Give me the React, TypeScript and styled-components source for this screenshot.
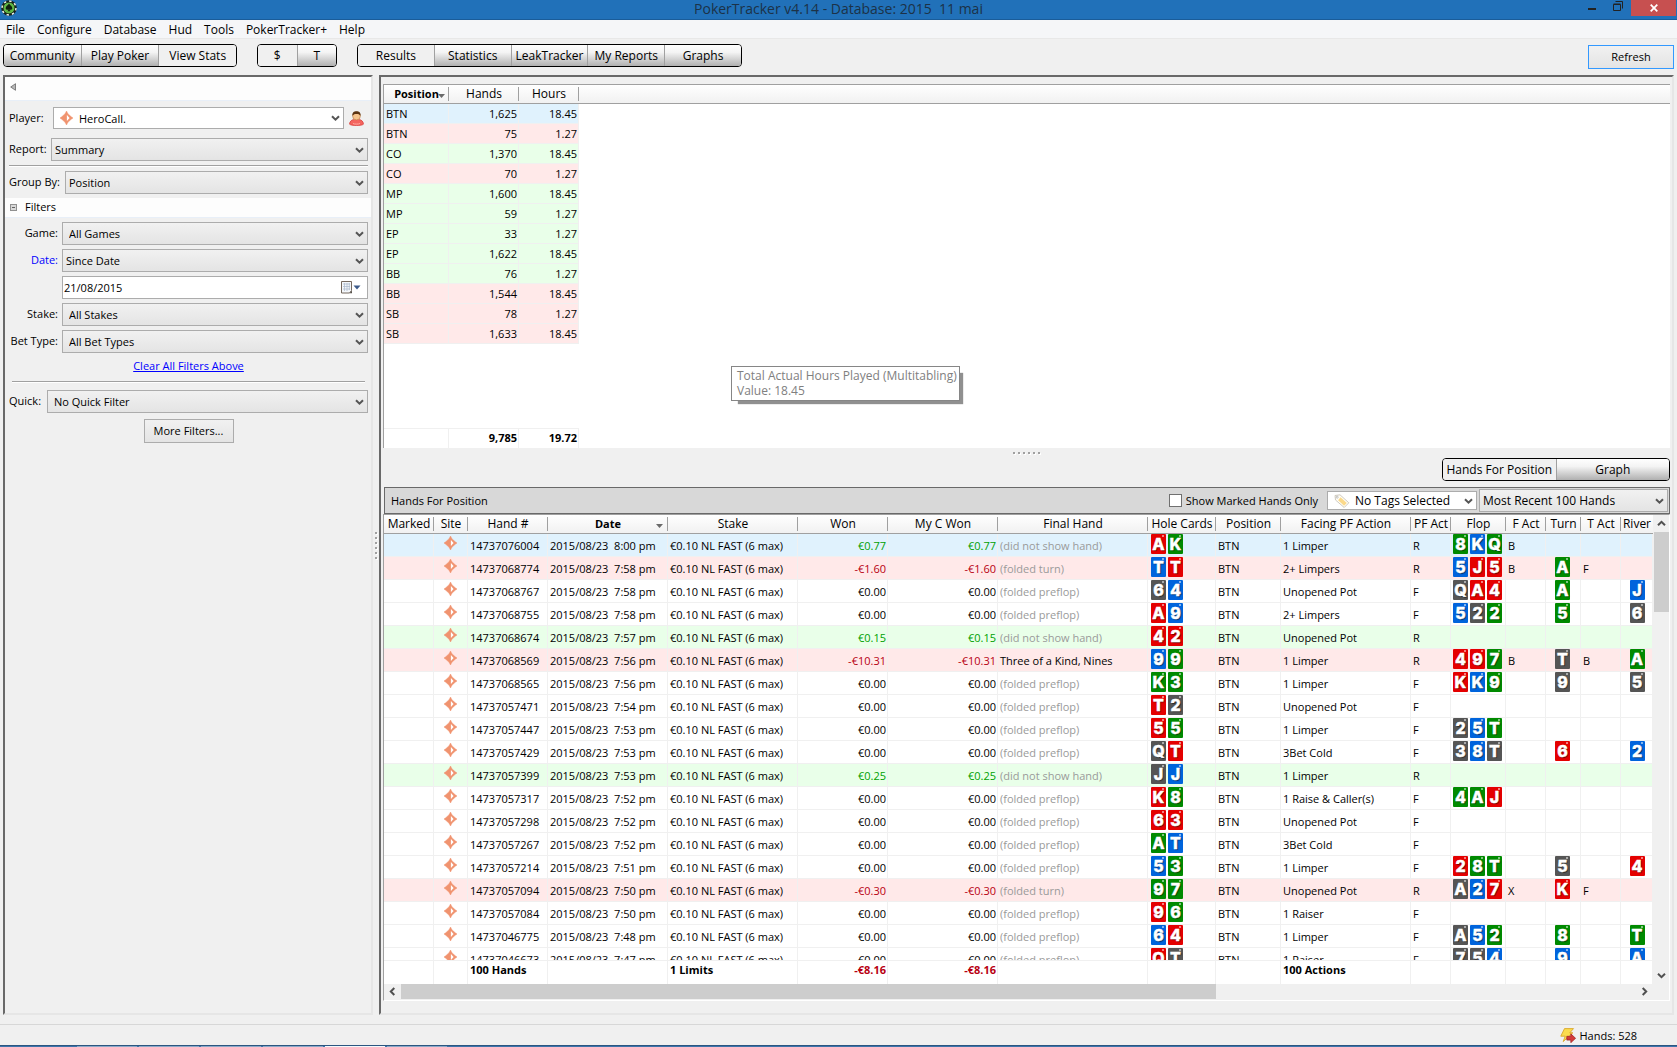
import React, { useState } from "react";
import styled, { createGlobalStyle, css } from "styled-components";

const GlobalStyle = createGlobalStyle`
  *, *::before, *::after { box-sizing: border-box; }
  body { margin: 0; overflow: hidden; background: #f0f0f0; }
  body, button, input, select {
    font-family: "Open Sans", "Noto Sans", sans-serif;
    font-size: 11px;
    color: #000;
  }
`;

/* ---------- data ---------- */

type Tone = "blue" | "pink" | "green" | "plain";

const toneColor: Record<Tone, string> = {
  blue: "#e0f2fd",
  pink: "#ffe9e9",
  green: "#e9ffe9",
  plain: "#ffffff",
};

const suitColor: Record<string, string> = {
  r: "#e40000",
  g: "#008a00",
  b: "#0064dc",
  k: "#555555",
};

const positions: [string, string, string, Tone][] = [
  ["BTN", "1,625", "18.45", "blue"],
  ["BTN", "75", "1.27", "pink"],
  ["CO", "1,370", "18.45", "green"],
  ["CO", "70", "1.27", "pink"],
  ["MP", "1,600", "18.45", "green"],
  ["MP", "59", "1.27", "green"],
  ["EP", "33", "1.27", "green"],
  ["EP", "1,622", "18.45", "green"],
  ["BB", "76", "1.27", "green"],
  ["BB", "1,544", "18.45", "pink"],
  ["SB", "78", "1.27", "pink"],
  ["SB", "1,633", "18.45", "pink"],
];

interface Hand {
  id: string;
  time: string;
  won?: string;
  final?: string;
  hole: string;
  facing: string;
  pf: string;
  flop?: string;
  fAct?: string;
  turn?: string;
  tAct?: string;
  river?: string;
  tone?: Tone;
}

const hands: Hand[] = [
  { id: "14737076004", time: "8:00", won: "€0.77", final: "(did not show hand)", hole: "Ar Kg", facing: "1 Limper", pf: "R", flop: "8g Kb Qg", fAct: "B", tone: "blue" },
  { id: "14737068774", time: "7:58", won: "-€1.60", final: "(folded turn)", hole: "Tb Tr", facing: "2+ Limpers", pf: "R", flop: "5b Jr 5r", fAct: "B", turn: "Ag", tAct: "F", tone: "pink" },
  { id: "14737068767", time: "7:58", hole: "6k 4b", facing: "Unopened Pot", pf: "F", flop: "Qk Ar 4r", turn: "Ag", river: "Jb" },
  { id: "14737068755", time: "7:58", hole: "Ar 9b", facing: "2+ Limpers", pf: "F", flop: "5b 2k 2g", turn: "5g", river: "6k" },
  { id: "14737068674", time: "7:57", won: "€0.15", final: "(did not show hand)", hole: "4r 2r", facing: "Unopened Pot", pf: "R", tone: "green" },
  { id: "14737068569", time: "7:56", won: "-€10.31", final: "Three of a Kind, Nines", hole: "9b 9g", facing: "1 Limper", pf: "R", flop: "4r 9r 7g", fAct: "B", turn: "Tk", tAct: "B", river: "Ag", tone: "pink" },
  { id: "14737068565", time: "7:56", hole: "Kg 3g", facing: "1 Limper", pf: "F", flop: "Kr Kb 9g", turn: "9k", river: "5k" },
  { id: "14737057471", time: "7:54", hole: "Tr 2k", facing: "Unopened Pot", pf: "F" },
  { id: "14737057447", time: "7:53", hole: "5r 5g", facing: "1 Limper", pf: "F", flop: "2k 5b Tg" },
  { id: "14737057429", time: "7:53", hole: "Qk Tr", facing: "3Bet Cold", pf: "F", flop: "3k 8b Tk", turn: "6r", river: "2b" },
  { id: "14737057399", time: "7:53", won: "€0.25", final: "(did not show hand)", hole: "Jk Jb", facing: "1 Limper", pf: "R", tone: "green" },
  { id: "14737057317", time: "7:52", hole: "Kr 8g", facing: "1 Raise & Caller(s)", pf: "F", flop: "4g Ag Jr" },
  { id: "14737057298", time: "7:52", hole: "6r 3r", facing: "Unopened Pot", pf: "F" },
  { id: "14737057267", time: "7:52", hole: "Ag Tb", facing: "3Bet Cold", pf: "F" },
  { id: "14737057214", time: "7:51", hole: "5b 3g", facing: "1 Limper", pf: "F", flop: "2r 8g Tg", turn: "5k", river: "4r" },
  { id: "14737057094", time: "7:50", won: "-€0.30", final: "(folded turn)", hole: "9g 7g", facing: "Unopened Pot", pf: "R", flop: "Ak 2b 7r", fAct: "X", turn: "Kr", tAct: "F", tone: "pink" },
  { id: "14737057084", time: "7:50", hole: "9r 6g", facing: "1 Raiser", pf: "F" },
  { id: "14737046775", time: "7:48", hole: "6b 4r", facing: "1 Limper", pf: "F", flop: "Ak 5b 2g", turn: "8g", river: "Tg" },
  { id: "14737046673", time: "7:47", hole: "Qr Tk", facing: "1 Raiser", pf: "F", flop: "7k 5k 4b", turn: "9b", river: "Ab" },
];

/* ---------- window frame ---------- */

const Window = styled.div`
  display: flex;
  flex-direction: column;
  height: 100vh;
  background: #f0f0f0;
  line-height: 15px;
  white-space: pre;
`;

const TitleBar = styled.header`
  display: grid;
  grid-template-columns: 1fr auto 1fr;
  height: 20px;
  flex: none;
  background: #2171b9;
  border-bottom: 1px solid #1a5c99;
`;

const AppMark = styled.div`
  padding-left: 1px;
  svg { display: block; }
`;

const WindowTitle = styled.h1`
  margin: 0;
  font-size: 14px;
  line-height: 18px;
  font-weight: 400;
  color: #1c3247;
`;

const WindowButtons = styled.div`
  display: flex;
  justify-content: flex-end;
  align-items: flex-start;
  padding-right: 1px;
`;

const WindowButton = styled.button<{ $close?: boolean }>`
  display: grid;
  place-items: center;
  width: ${(p) => (p.$close ? 45 : 26)}px;
  height: 16px;
  padding: 0;
  border: 0;
  background: ${(p) => (p.$close ? "#c75050" : "transparent")};
`;

const MenuBar = styled.nav`
  display: flex;
  flex: none;
  height: 19px;
  background: #f5f6f8;
  border-bottom: 1px solid #e8e8e8;
`;

const MenuItem = styled.button`
  padding: 1px 6px 0;
  border: 0;
  background: transparent;
  font-size: 12px;
  line-height: 17px;
`;

const Toolbar = styled.div`
  display: flex;
  flex: none;
  gap: 20px;
  height: 36px;
  padding: 5px 3px 0;
`;

const Segments = styled.div<{ $width: number }>`
  display: flex;
  flex: none;
  width: ${(p) => p.$width}px;
  height: 23px;
  border: 1px solid #000;
  border-radius: 4px;
  overflow: hidden;
`;

const Segment = styled.button<{ $active?: boolean }>`
  flex: 1 1 0;
  min-width: 0;
  padding: 0;
  border: 0;
  background: ${(p) =>
    p.$active ? "#f0f0f0" : "linear-gradient(#ffffff 0%, #f4f4f4 35%, #b0b0b0 100%)"};
  font-size: 12px;
  line-height: 20px;
  & + & { border-left: 1px solid #a0a0a0; }
`;

const buttonFace = css`
  background: linear-gradient(#f1f1f1, #e4e4e4);
  border: 1px solid #acacac;
  border-radius: 0;
`;

const PushButton = styled.button<{ $width: number; $focused?: boolean }>`
  ${buttonFace}
  width: ${(p) => p.$width}px;
  height: 24px;
  padding: 0 0 2px;
  border-color: ${(p) => (p.$focused ? "#3399ff" : "#acacac")};
`;

const ToolbarEnd = styled.div`
  margin-left: auto;
  padding-top: 1px;
`;

const Main = styled.main`
  display: flex;
  flex: 1 1 0;
  min-height: 0;
  padding: 0 3px;
  margin-bottom: 9px;
`;

const sunken = css`
  border: 2px solid;
  border-color: #696969 #e6e6e6 #e6e6e6 #696969;
`;

const Splitter = styled.div<{ $vertical?: boolean }>`
  display: flex;
  flex: none;
  flex-direction: ${(p) => (p.$vertical ? "column" : "row")};
  align-items: center;
  justify-content: center;
  gap: 3px;
  ${(p) => (p.$vertical ? "width: 6px;" : "height: 10px;")}
`;

const SplitterDot = styled.i`
  width: 2px;
  height: 2px;
  background: #a0a0a0;
  box-shadow: 1px 1px 0 #fff;
`;

/* ---------- sidebar ---------- */

const Sidebar = styled.aside`
  ${sunken}
  flex: 0 0 370px;
  display: flex;
  flex-direction: column;
`;

const PanelStrip = styled.div<{ $height: number }>`
  display: flex;
  align-items: center;
  gap: 8px;
  flex: none;
  height: ${(p) => p.$height}px;
  padding-left: 5px;
  background: #fdfdfd;
  border-bottom: 1px solid #e8eff8;
`;

const FieldGroup = styled.div<{ $top: number }>`
  display: flex;
  flex-direction: column;
  gap: 4px;
  padding: ${(p) => p.$top}px 3px 4px 4px;
`;

const Field = styled.div<{ $gap?: number }>`
  display: flex;
  align-items: center;
  gap: 4px;
  margin-bottom: ${(p) => p.$gap ?? 0}px;
`;

const FieldLabel = styled.label<{ $width: number; $right?: boolean; $active?: boolean }>`
  flex: none;
  width: ${(p) => p.$width}px;
  padding-bottom: 2px;
  text-align: ${(p) => (p.$right ? "right" : "left")};
  color: ${(p) => (p.$active ? "#0000ff" : "#000")};
`;

const Rule = styled.hr`
  width: 100%;
  height: 2px;
  margin: 0;
  border: 0;
  border-top: 1px solid #a0a0a0;
  background: #fff;
`;

const InsetRule = styled(Rule)`
  width: auto;
  margin: 2px 3px 3px;
`;

const ClearLink = styled.a`
  align-self: center;
  line-height: 18px;
  color: #0000ff;
`;

const Centered = styled.div`
  display: flex;
  justify-content: center;
  padding-top: 2px;
`;

const IconButton = styled.button`
  flex: none;
  width: 20px;
  height: 16px;
  padding: 0 3px 0 0;
  border: 0;
  background: transparent;
  svg { display: block; margin: auto; }
`;

const CollapseButton = styled.button`
  padding: 0;
  margin-bottom: 4px;
  border: 0;
  background: transparent;
  svg { display: block; }
`;

/* ---------- drop-downs ---------- */

const SelectFrame = styled.div<{ $width?: number }>`
  position: relative;
  ${(p) => (p.$width ? `flex: none; width: ${p.$width}px;` : "flex: 1 1 0; min-width: 0;")}
`;

const SelectBox = styled.select<{ $white?: boolean; $height: number; $indent: number }>`
  ${buttonFace}
  appearance: none;
  display: block;
  width: 100%;
  height: ${(p) => p.$height}px;
  padding: 0 18px 0 ${(p) => p.$indent}px;
  ${(p) => p.$white && "background: #fff;"}
`;

const SelectArrow = styled.svg`
  position: absolute;
  right: 4px;
  top: 50%;
  margin-top: -3px;
  pointer-events: none;
`;

const SelectIcon = styled.span`
  position: absolute;
  left: 7px;
  top: 50%;
  height: 14px;
  margin-top: -7px;
  pointer-events: none;
  svg { display: block; }
`;

const DateFrame = styled.div`
  display: flex;
  align-items: center;
  flex: 1 1 0;
  height: 23px;
  margin-left: 53px;
  padding-right: 6px;
  background: #fff;
  border: 1px solid #acacac;
`;

const DateInput = styled.input`
  flex: 1 1 0;
  min-width: 0;
  padding: 0 1px;
  border: 0;
  outline: 0;
  background: transparent;
`;

interface SelectProps {
  id?: string;
  label?: string;
  value: string;
  width?: number;
  height?: number;
  indent?: number;
  white?: boolean;
  icon?: React.ReactNode;
}

function Select({ id, label, value, width, height = 23, indent = 6, white, icon }: SelectProps) {
  return (
    <SelectFrame $width={width}>
      <SelectBox id={id} aria-label={label} $white={white} $height={height} $indent={indent}>
        <option>{value}</option>
      </SelectBox>
      {icon && <SelectIcon>{icon}</SelectIcon>}
      <SelectArrow width="9" height="7" viewBox="0 0 9 7">
        <path d="M1 1.2 4.5 4.7 8 1.2" fill="none" stroke="#555" strokeWidth="2" />
      </SelectArrow>
    </SelectFrame>
  );
}

/* ---------- report area ---------- */

const Content = styled.section`
  ${sunken}
  flex: 1 1 0;
  min-width: 0;
  display: flex;
  flex-direction: column;
  padding: 7px 2px 12px;
`;

const SummaryPane = styled.div`
  position: relative;
  flex: 0 0 364px;
  display: flex;
  flex-direction: column;
  justify-content: space-between;
  background: #fff;
  border-left: 1px solid #a0a0a0;
  border-top: 1px solid #a0a0a0;
`;

const HandsPane = styled.div`
  flex: 1 1 0;
  min-height: 0;
  display: flex;
  flex-direction: column;
  border: 1px solid;
  border-color: #a0a0a0 #fff #fff #a0a0a0;
`;

const HandsArea = styled.div`
  display: flex;
  flex: 1 1 0;
  min-height: 0;
`;

const HandsTables = styled.div`
  display: flex;
  flex-direction: column;
  flex: 1 1 0;
  min-width: 0;
  background: #fff;
`;

const Clip = styled.div`
  flex: 1 1 0;
  min-height: 0;
  overflow: hidden;
`;

const Grid = styled.table`
  width: 100%;
  table-layout: fixed;
  border-collapse: separate;
  border-spacing: 0;
  flex: none;
`;

const HeadCell = styled.th<{ $sorted?: boolean; $last?: boolean }>`
  position: relative;
  height: 19px;
  padding: 0;
  overflow: hidden;
  font-size: ${(p) => (p.$sorted ? 11 : 12)}px;
  line-height: 18px;
  font-weight: ${(p) => (p.$sorted ? 700 : 400)};
  text-align: center;
  background: linear-gradient(#ffffff, #f1f1f1);
  border-bottom: 1px solid #a0a0a0;
  &::after {
    content: "";
    position: absolute;
    right: 0;
    top: 2px;
    width: ${(p) => (p.$last ? 0 : 1)}px;
    height: 14px;
    background: #a0a0a0;
  }
`;

const SortMark = styled.svg<{ $right: number }>`
  position: absolute;
  right: ${(p) => p.$right}px;
  top: 9px;
`;

const Row = styled.tr<{ $tone: Tone }>`
  background: ${(p) => toneColor[p.$tone]};
`;

type Align = "left" | "right" | "center";

const Cell = styled.td<{ $align?: Align; $color?: string }>`
  height: 20px;
  padding: 0 1px 0 2px;
  line-height: 18px;
  text-align: ${(p) => p.$align ?? "left"};
  color: ${(p) => p.$color ?? "#000"};
  border-right: 1px solid #f0f0f0;
  border-bottom: 1px solid #f0f0f0;
`;

const HandCell = styled(Cell)`
  height: 23px;
  line-height: 20px;
  vertical-align: bottom;
`;

const FootCell = styled.td<{ $align?: Align; $height: number; $color?: string }>`
  height: ${(p) => p.$height}px;
  padding: 0 1px 0 2px;
  vertical-align: top;
  line-height: 18px;
  font-weight: 700;
  text-align: ${(p) => p.$align ?? "left"};
  color: ${(p) => p.$color ?? "#000"};
  border-top: 1px solid #f0f0f0;
  border-right: 1px solid #f0f0f0;
`;

const Blank = styled.td`
  padding: 0;
  background: #fff;
`;

const CardRow = styled.div<{ $center?: boolean; $indent: number }>`
  display: flex;
  gap: 2px;
  height: 22px;
  padding-left: ${(p) => p.$indent}px;
  padding-right: ${(p) => (p.$center ? 2 : 0)}px;
  justify-content: ${(p) => (p.$center ? "center" : "flex-start")};
`;

const PlayingCard = styled.span<{ $suit: string }>`
  position: relative;
  display: flex;
  justify-content: center;
  flex: none;
  width: 15px;
  height: 20px;
  border-radius: 1px;
  background: ${(p) => suitColor[p.$suit]};
  color: #fff;
  font-family: "Inter", "Open Sans", sans-serif;
  font-size: 16px;
  font-weight: 800;
  line-height: 20px;
  -webkit-text-stroke: 0.4px #fff;
  text-shadow: 1px 1px 1px rgba(0, 0, 0, 0.55);
  &::after {
    content: "";
    position: absolute;
    right: 2px;
    top: 1px;
    width: 2px;
    height: 2px;
    background: rgba(255, 255, 255, 0.5);
  }
`;

const SiteBox = styled.div`
  display: flex;
  justify-content: center;
  height: 22px;
  padding: 2px 2px 0 0;
`;

const Tooltip = styled.div`
  position: absolute;
  left: 347px;
  top: 281px;
  padding: 1px 2px 2px 5px;
  background: #fff;
  border: 1px solid #868686;
  color: #808080;
  font-size: 12px;
  box-shadow: 5px 5px 1px -2px #909090;
`;

const ViewSwitch = styled.div`
  display: flex;
  justify-content: flex-end;
  flex: none;
  margin-bottom: 6px;
`;

const HandsBar = styled.div`
  display: flex;
  align-items: center;
  flex: none;
  height: 27px;
  margin-left: 1px;
  padding: 0 1px 0 6px;
  background: #d8d8d8;
  border: 1px solid #696969;
  select { font-size: 12px; }
`;

const HandsBarTitle = styled.h2`
  flex: 1 1 0;
  margin: 0;
  font-size: 11px;
  font-weight: 400;
`;

const CheckLabel = styled.label`
  display: flex;
  align-items: center;
  gap: 4px;
  margin-right: 9px;
`;

const Check = styled.input`
  appearance: none;
  width: 13px;
  height: 13px;
  margin: 0;
  background: #fff;
  border: 1px solid #707070;
  &:checked { background: #707070; box-shadow: inset 0 0 0 2px #fff; }
`;

const BarGap = styled.div`
  width: 2px;
`;

const VScroll = styled.div`
  display: flex;
  flex-direction: column;
  flex: none;
  width: 16px;
  padding-left: 1px;
`;

const HScroll = styled.div`
  display: flex;
  flex: none;
  height: 16px;
  padding: 0 16px 1px 0;
`;

const ScrollButton = styled.button`
  display: grid;
  place-items: center;
  flex: none;
  width: 17px;
  height: 17px;
  padding: 0;
  border: 0;
  background: transparent;
  ${VScroll} & { width: 15px; }
  ${HScroll} & { height: 15px; }
`;

const ScrollTrack = styled.div`
  display: flex;
  flex: 1 1 0;
  min-width: 0;
  min-height: 0;
`;

const ScrollThumb = styled.div<{ $vertical?: boolean }>`
  background: #cdcdcd;
  ${(p) => (p.$vertical ? "width: 100%; height: 80px;" : "width: 66%; height: 100%;")}
`;

/* ---------- status and taskbar ---------- */

const StatusBar = styled.footer`
  display: flex;
  align-items: center;
  justify-content: flex-end;
  gap: 3px;
  flex: none;
  height: 21px;
  padding-right: 40px;
  border-top: 1px solid #d7d7d7;
`;

const Taskbar = styled.div`
  display: flex;
  gap: 2px;
  flex: none;
  height: 2px;
  padding-left: 77px;
  background: #3d74ab;
  border-top: 1px solid #2c5680;
`;

const TaskTile = styled.i<{ $active?: boolean }>`
  width: 60px;
  background: ${(p) => (p.$active ? "#f4f8fc" : "#8aa9c8")};
`;

/* ---------- drawings ---------- */

const ChipMark = () => (
  <svg width="17" height="17" viewBox="0 0 17 17">
    <circle cx="8" cy="8" r="7.8" fill="#17221a" />
    <circle cx="8" cy="8" r="6.9" fill="none" stroke="#e9efe6" strokeWidth="1.6" strokeDasharray="2.4 3.02" />
    <circle cx="8" cy="8" r="5.8" fill="#5fb746" stroke="#17221a" strokeWidth="0.6" />
    <path d="M8 3.6c1 1.6 3.3 2.7 3.3 4.6 0 1.5-1.8 2-2.7 1 .1.9.4 1.5 1 2H6.4c.6-.5.9-1.1 1-2-.9 1-2.7.5-2.7-1C4.7 6.3 7 5.2 8 3.6z" fill="#10220f" />
  </svg>
);

const SiteMark = () => (
  <svg width="13" height="14" viewBox="0 0 13 14">
    <path
      d="M6.5 0C7.300 2 8.300 3.300 9.600 4.300 10.600 5.200 11.700 6.200 13 7c-1.300.8-2.400 1.800-3.400 2.700C8.300 10.700 7.300 12 6.500 14 5.700 12 4.700 10.700 3.400 9.700 2.400 8.800 1.300 7.800 0 7c1.300-.8 2.400-1.800 3.400-2.700C4.700 3.300 5.700 2 6.500 0z"
      fill="#f0936f"
      stroke="#f0936f"
      strokeWidth=".5"
    />
    <path d="M6.900 3.900 9.600 7 6.900 10.100z" fill="#fff" />
  </svg>
);

const PersonMark = () => (
  <svg width="15" height="15" viewBox="0 0 15 15">
    <path d="M.6 13.200C.6 10 3 8.700 5.400 8.500h4.200c2.400.2 4.800 1.500 4.800 4.700-1.500 1.700-12.300 1.700-13.800 0z" fill="#f4655f" stroke="#d9403c" strokeWidth=".8" />
    <path d="M4 12.500c1 .8 6 .8 7 0" stroke="#ffaaa0" fill="none" />
    <circle cx="7.500" cy="5" r="3.900" fill="#f6c48d" stroke="#b87b45" strokeWidth=".6" />
    <path d="M3.400 4.800C3 1.600 5 .2 7.500.2s4.500 1.400 4.100 4.600C10.500 3.300 9 3 7.500 3s-3 .3-4.100 1.800z" fill="#5b3413" />
  </svg>
);

const CalendarMark = () => (
  <svg width="20" height="13" viewBox="0 0 20 13">
    <path d="M.5.500h10v9l-2 2.500h-8z" fill="#f4f7fb" stroke="#74695f" />
    <path d="M2 3h7M2 5.500h7M2 8h7M3.500 2v8M6 2v8M8.300 2v7" stroke="#a9b8cc" strokeWidth=".7" />
    <path d="M8.500 12.300 11 9.500v2.800z" fill="#55504a" />
    <path d="M12.500 4.500h7L16 8.500z" fill="#3d5a8a" />
  </svg>
);

const TagMark = () => (
  <svg width="16" height="14" viewBox="0 0 16 14">
    <path d="M1 1.500 6 .8l8.800 8-4.600 4.700L1.500 6z" fill="#fffdf6" stroke="#c9c4b8" strokeWidth=".9" />
    <path d="M6.500 3.200 12.800 9l-2.700 2.800-6-5.500z" fill="#fbd98a" />
    <circle cx="3.200" cy="3.200" r="1" fill="#fff" stroke="#a8a8a8" strokeWidth=".7" />
  </svg>
);

const BoltMark = () => (
  <svg width="16" height="15" viewBox="0 0 16 15">
    <path d="M4.500.600h9L9.800 4.800h3L3.200 13.600l2-5.400H.800z" fill="#fbdc4d" stroke="#d9a62a" strokeWidth=".9" />
    <path d="M6.800 8.300h4V5.800l4.800 4.500-4.800 4.400v-2.600h-4z" fill="#d43a3a" stroke="#9e2020" strokeWidth=".7" />
  </svg>
);

const Chevron = ({ turn }: { turn: number }) => (
  <svg width="9" height="9" viewBox="0 0 9 9">
    <path d="M1 2.700 4.500 6.200 8 2.700" transform={`rotate(${turn} 4.500 4.500)`} fill="none" stroke="#505050" strokeWidth="2" />
  </svg>
);

const SortTriangle = ({ right }: { right: number }) => (
  <SortMark $right={right} width="7" height="4" viewBox="0 0 7 4">
    <path d="M0 0h7L3.500 4z" fill="#6a6a6a" />
  </SortMark>
);

/* ---------- parts ---------- */

function SegmentGroup({ items, initial, width }: { items: string[]; initial: number; width: number }) {
  const [active, setActive] = useState(initial);
  return (
    <Segments $width={width} role="group">
      {items.map((item, i) => (
        <Segment key={item} $active={i === active} aria-pressed={i === active} onClick={() => setActive(i)}>
          {item}
        </Segment>
      ))}
    </Segments>
  );
}

function Dots({ vertical }: { vertical?: boolean }) {
  return (
    <Splitter $vertical={vertical}>
      {[0, 1, 2, 3, 4, 5].map((n) => (
        <SplitterDot key={n} />
      ))}
    </Splitter>
  );
}

function Cards({ list, center, indent = 0 }: { list?: string; center?: boolean; indent?: number }) {
  if (!list) return null;
  return (
    <CardRow $center={center} $indent={indent}>
      {list.split(" ").map((card, i) => (
        <PlayingCard key={i} $suit={card[1]}>
          {card[0]}
        </PlayingCard>
      ))}
    </CardRow>
  );
}

function Columns({ widths }: { widths: number[] }) {
  return (
    <colgroup>
      {widths.map((w, i) => (
        <col key={i} width={w} />
      ))}
      <col />
    </colgroup>
  );
}

const summaryWidths = [65, 70, 60];
const handWidths = [50, 34, 80, 120, 130, 90, 110, 150, 68, 65, 130, 40, 55, 40, 35, 40];
const handHeads = [
  "Marked", "Site", "Hand #", "Date", "Stake", "Won", "My C Won", "Final Hand",
  "Hole Cards", "Position", "Facing PF Action", "PF Act", "Flop", "F Act", "Turn", "T Act", "River",
];

function moneyColor(value: string) {
  if (value === "€0.00") return "#000";
  return value.startsWith("-") ? "#b80012" : "#00a000";
}

function Summary() {
  return (
    <SummaryPane>
      <Grid>
        <Columns widths={summaryWidths} />
        <thead>
          <tr>
            <HeadCell $sorted>
              Position
              <SortTriangle right={4} />
            </HeadCell>
            <HeadCell>Hands</HeadCell>
            <HeadCell>Hours</HeadCell>
            <HeadCell $last />
          </tr>
        </thead>
        <tbody>
          {positions.map(([name, count, hours, tone], i) => (
            <Row key={i} $tone={tone}>
              <Cell>{name}</Cell>
              <Cell $align="right">{count}</Cell>
              <Cell $align="right">{hours}</Cell>
              <Blank />
            </Row>
          ))}
        </tbody>
      </Grid>
      <Grid>
        <Columns widths={summaryWidths} />
        <tbody>
          <tr>
            <FootCell $height={20} />
            <FootCell $height={20} $align="right">9,785</FootCell>
            <FootCell $height={20} $align="right">19.72</FootCell>
            <Blank />
          </tr>
        </tbody>
      </Grid>
      <Tooltip role="tooltip">{"Total Actual Hours Played (Multitabling)\nValue: 18.45"}</Tooltip>
    </SummaryPane>
  );
}

function HandRow({ hand }: { hand: Hand }) {
  const won = hand.won ?? "€0.00";
  const final = hand.final ?? "(folded preflop)";
  return (
    <Row $tone={hand.tone ?? "plain"}>
      <HandCell />
      <HandCell>
        <SiteBox>
          <SiteMark />
        </SiteBox>
      </HandCell>
      <HandCell>{hand.id}</HandCell>
      <HandCell>{`2015/08/23  ${hand.time} pm`}</HandCell>
      <HandCell>€0.10 NL FAST (6 max)</HandCell>
      <HandCell $align="right" $color={moneyColor(won)}>{won}</HandCell>
      <HandCell $align="right" $color={moneyColor(won)}>{won}</HandCell>
      <HandCell $color={final.startsWith("(") ? "#9a9a9a" : "#000"}>{final}</HandCell>
      <HandCell>
        <Cards list={hand.hole} indent={1} />
      </HandCell>
      <HandCell>BTN</HandCell>
      <HandCell>{hand.facing}</HandCell>
      <HandCell>{hand.pf}</HandCell>
      <HandCell>
        <Cards list={hand.flop} />
      </HandCell>
      <HandCell>{hand.fAct}</HandCell>
      <HandCell>
        <Cards list={hand.turn} center />
      </HandCell>
      <HandCell>{hand.tAct}</HandCell>
      <HandCell>
        <Cards list={hand.river} center indent={2} />
      </HandCell>
    </Row>
  );
}

function Hands() {
  const totals: Record<number, string> = { 2: "100 Hands", 4: "1 Limits", 5: "-€8.16", 6: "-€8.16", 10: "100 Actions" };
  return (
    <HandsPane>
      <HandsArea>
        <HandsTables>
          <Clip>
            <Grid>
              <Columns widths={handWidths} />
              <thead>
                <tr>
                  {handHeads.map((head, i) => (
                    <HeadCell key={head} $sorted={head === "Date"} $last={i === handHeads.length - 1}>
                      {head}
                      {head === "Date" && <SortTriangle right={5} />}
                    </HeadCell>
                  ))}
                </tr>
              </thead>
              <tbody>
                {hands.map((hand) => (
                  <HandRow key={hand.id} hand={hand} />
                ))}
              </tbody>
            </Grid>
          </Clip>
          <Grid>
            <Columns widths={handWidths} />
            <tbody>
              <tr>
                {handHeads.map((head, i) => (
                  <FootCell
                    key={head}
                    $height={24}
                    $align={i === 5 || i === 6 ? "right" : "left"}
                    $color={i === 5 || i === 6 ? "#b80012" : "#000"}
                  >
                    {totals[i]}
                  </FootCell>
                ))}
              </tr>
            </tbody>
          </Grid>
        </HandsTables>
        <VScroll>
          <ScrollButton aria-label="Scroll up"><Chevron turn={180} /></ScrollButton>
          <ScrollTrack><ScrollThumb $vertical /></ScrollTrack>
          <ScrollButton aria-label="Scroll down"><Chevron turn={0} /></ScrollButton>
        </VScroll>
      </HandsArea>
      <HScroll>
        <ScrollButton aria-label="Scroll left"><Chevron turn={90} /></ScrollButton>
        <ScrollTrack><ScrollThumb /></ScrollTrack>
        <ScrollButton aria-label="Scroll right"><Chevron turn={-90} /></ScrollButton>
      </HScroll>
    </HandsPane>
  );
}

function Filters() {
  return (
    <Sidebar>
      <PanelStrip $height={24}>
        <CollapseButton aria-label="Collapse panel">
          <svg width="6" height="8" viewBox="0 0 6 8">
            <path d="M5.500.700v6.600L.700 4z" fill="#b8b8b8" stroke="#666" strokeWidth=".8" />
          </svg>
        </CollapseButton>
      </PanelStrip>
      <FieldGroup $top={6}>
        <Field $gap={5}>
          <FieldLabel $width={40} htmlFor="player">Player:</FieldLabel>
          <Select id="player" value="HeroCall." height={22} indent={25} white icon={<SiteMark />} />
          <IconButton aria-label="Choose player"><PersonMark /></IconButton>
        </Field>
        <Field>
          <FieldLabel $width={38} htmlFor="report">Report:</FieldLabel>
          <Select id="report" value="Summary" indent={3} />
        </Field>
        <Rule />
        <Field>
          <FieldLabel $width={52} htmlFor="group">Group By:</FieldLabel>
          <Select id="group" value="Position" indent={3} />
        </Field>
      </FieldGroup>
      <PanelStrip $height={20}>
        <svg width="7" height="7" viewBox="0 0 7 7">
          <rect x=".5" y=".5" width="6" height="6" fill="#d8d8d8" stroke="#909090" />
          <path d="M2 3.500h3" stroke="#606060" />
        </svg>
        <FieldLabel as="span" $width={60}>Filters</FieldLabel>
      </PanelStrip>
      <FieldGroup $top={4}>
        <Field>
          <FieldLabel $width={49} $right htmlFor="game">Game:</FieldLabel>
          <Select id="game" value="All Games" />
        </Field>
        <Field>
          <FieldLabel $width={49} $right $active htmlFor="date">Date:</FieldLabel>
          <Select id="date" value="Since Date" indent={3} />
        </Field>
        <Field>
          <DateFrame>
            <DateInput aria-label="Since date" defaultValue="21/08/2015" />
            <CalendarMark />
          </DateFrame>
        </Field>
        <Field>
          <FieldLabel $width={49} $right htmlFor="stake">Stake:</FieldLabel>
          <Select id="stake" value="All Stakes" />
        </Field>
        <Field>
          <FieldLabel $width={49} $right htmlFor="bet">Bet Type:</FieldLabel>
          <Select id="bet" value="All Bet Types" />
        </Field>
        <ClearLink href="#clear">Clear All Filters Above</ClearLink>
        <InsetRule />
        <Field>
          <FieldLabel $width={34} htmlFor="quick">Quick:</FieldLabel>
          <Select id="quick" value="No Quick Filter" />
        </Field>
        <Centered>
          <PushButton $width={90}>More Filters...</PushButton>
        </Centered>
      </FieldGroup>
    </Sidebar>
  );
}

export default function App() {
  const [marked, setMarked] = useState(false);
  return (
    <Window>
      <GlobalStyle />
      <TitleBar>
        <AppMark><ChipMark /></AppMark>
        <WindowTitle>{"PokerTracker v4.14 - Database: 2015  11 mai"}</WindowTitle>
        <WindowButtons>
          <WindowButton aria-label="Minimise">
            <svg width="8" height="16"><path d="M0 9h8" stroke="#222" strokeWidth="2" /></svg>
          </WindowButton>
          <WindowButton aria-label="Restore">
            <svg width="10" height="16">
              <path d="M.5 4.500h7v6h-7zM.5 4h7M2.500 1.500h7v7" fill="none" stroke="#222" />
            </svg>
          </WindowButton>
          <WindowButton aria-label="Close" $close>
            <svg width="8" height="14"><path d="M.7 3.700 7.300 10.300M7.300 3.700.700 10.300" stroke="#fff" strokeWidth="1.800" /></svg>
          </WindowButton>
        </WindowButtons>
      </TitleBar>
      <MenuBar>
        {["File", "Configure", "Database", "Hud", "Tools", "PokerTracker+", "Help"].map((item) => (
          <MenuItem key={item}>{item}</MenuItem>
        ))}
      </MenuBar>
      <Toolbar>
        <SegmentGroup items={["Community", "Play Poker", "View Stats"]} initial={2} width={234} />
        <SegmentGroup items={["$", "T"]} initial={0} width={80} />
        <SegmentGroup items={["Results", "Statistics", "LeakTracker", "My Reports", "Graphs"]} initial={0} width={385} />
        <ToolbarEnd>
          <PushButton $width={86} $focused>Refresh</PushButton>
        </ToolbarEnd>
      </Toolbar>
      <Main>
        <Filters />
        <Dots vertical />
        <Content>
          <Summary />
          <Dots />
          <ViewSwitch>
            <SegmentGroup items={["Hands For Position", "Graph"]} initial={0} width={228} />
          </ViewSwitch>
          <HandsBar>
            <HandsBarTitle>Hands For Position</HandsBarTitle>
            <CheckLabel>
              <Check type="checkbox" checked={marked} onChange={(e) => setMarked(e.target.checked)} />
              Show Marked Hands Only
            </CheckLabel>
            <Select label="Tags" value="No Tags Selected" width={150} height={19} indent={27} white icon={<TagMark />} />
            <BarGap />
            <Select label="Hand range" value="Most Recent 100 Hands" width={189} indent={3} />
          </HandsBar>
          <Hands />
        </Content>
      </Main>
      <StatusBar>
        <BoltMark />
        <span>Hands: 528</span>
      </StatusBar>
      <Taskbar>
        {[0, 1, 2, 3, 4, 5].map((n) => (
          <TaskTile key={n} $active={n === 4} />
        ))}
      </Taskbar>
    </Window>
  );
}
